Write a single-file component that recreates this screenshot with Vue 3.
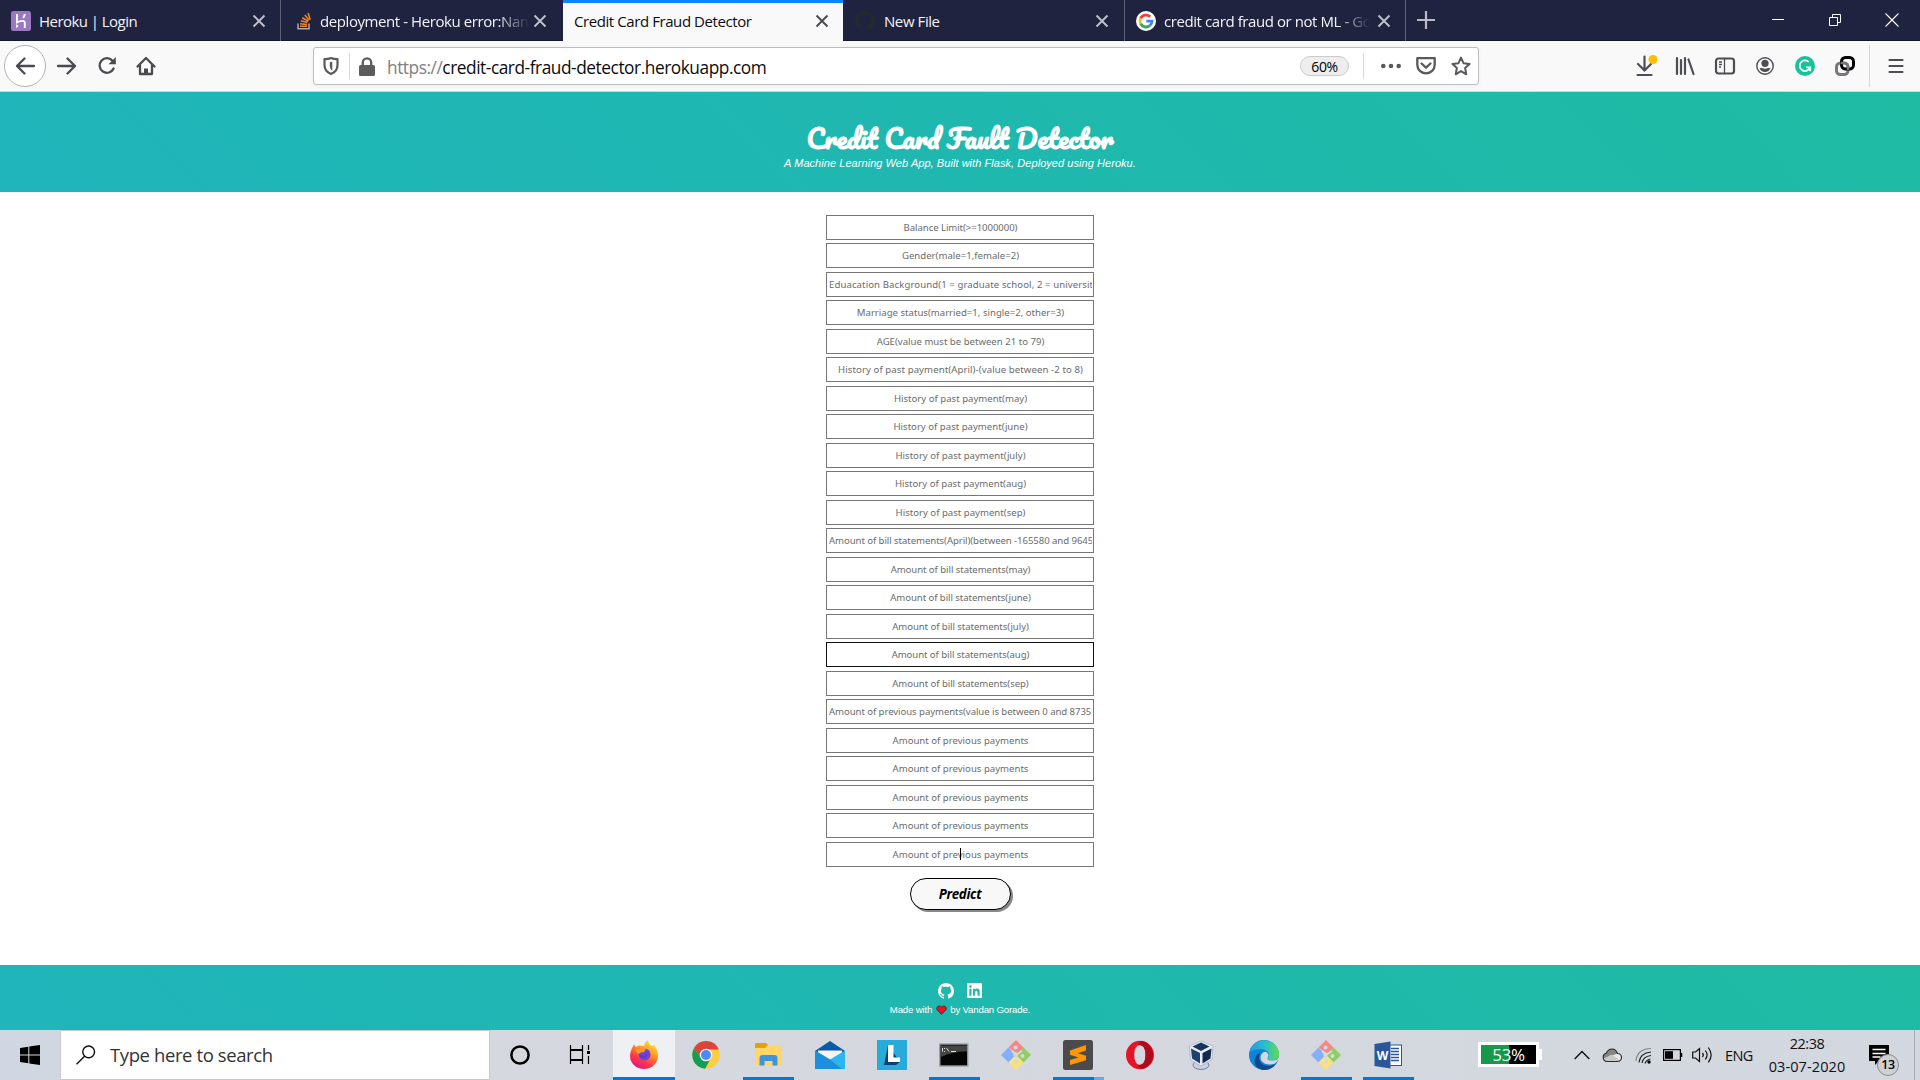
<script setup>
const fields = [
  { label: 'Balance Limit(>=1000000)', size: 'snug' },
  { label: 'Gender(male=1,female=2)' },
  { label: 'Eduacation Background(1 = graduate school, 2 = university, 3 = high school)', size: 'wide' },
  { label: 'Marriage status(married=1, single=2, other=3)' },
  { label: 'AGE(value must be between 21 to 79)' },
  { label: 'History of past payment(April)-(value between -2 to 8)', size: 'wide' },
  { label: 'History of past payment(may)' },
  { label: 'History of past payment(june)' },
  { label: 'History of past payment(july)' },
  { label: 'History of past payment(aug)' },
  { label: 'History of past payment(sep)' },
  { label: 'Amount of bill statements(April)(between -165580 and 964511)', size: 'snug' },
  { label: 'Amount of bill statements(may)', size: 'snug' },
  { label: 'Amount of bill statements(june)', size: 'snug' },
  { label: 'Amount of bill statements(july)', size: 'snug' },
  { label: 'Amount of bill statements(aug)', size: 'snug' },
  { label: 'Amount of bill statements(sep)', size: 'snug' },
  { label: 'Amount of previous payments(value is between 0 and 873552)', size: 'snug' },
  { label: 'Amount of previous payments' },
  { label: 'Amount of previous payments' },
  { label: 'Amount of previous payments' },
  { label: 'Amount of previous payments' },
  { label: 'Amount of previous payments' },
]
const hovered = 15
const focused = 22

const tabs = [
  { id: 'heroku', title: 'Heroku | Login' },
  { id: 'so', title: 'deployment - Heroku error:Name' },
  { id: 'detector', title: 'Credit Card Fraud Detector', active: true },
  { id: 'github', title: 'New File' },
  { id: 'google', title: 'credit card fraud or not ML - Goo' },
]

const apps = [
  { id: 'cortana' },
  { id: 'taskview' },
  { id: 'firefox', state: 'current' },
  { id: 'chrome' },
  { id: 'explorer', state: 'open' },
  { id: 'mail' },
  { id: 'lenovo' },
  { id: 'terminal', state: 'open' },
  { id: 'git' },
  { id: 'sublime', state: 'stacked' },
  { id: 'opera' },
  { id: 'vbox' },
  { id: 'edge' },
  { id: 'git', state: 'open' },
  { id: 'word', state: 'open' },
]
const octocat = 'M8 0C3.58 0 0 3.58 0 8c0 3.54 2.29 6.53 5.47 7.59.4.07.55-.17.55-.38 0-.19-.01-.82-.01-1.49-2.01.37-2.53-.49-2.69-.94-.09-.23-.48-.94-.82-1.13-.28-.15-.68-.52-.01-.53.63-.01 1.08.58 1.23.82.72 1.21 1.87.87 2.33.66.07-.52.28-.87.51-1.07-1.78-.2-3.64-.89-3.64-3.95 0-.87.31-1.59.82-2.15-.08-.2-.36-1.02.08-2.12 0 0 .67-.21 2.2.82.64-.18 1.32-.27 2-.27s1.36.09 2 .27c1.53-1.04 2.2-.82 2.2-.82.44 1.1.16 1.92.08 2.12.51.56.82 1.27.82 2.15 0 3.07-1.87 3.75-3.65 3.95.29.25.54.73.54 1.48 0 1.07-.01 1.93-.01 2.2 0 .21.15.46.55.38A8.01 8.01 0 0 0 16 8c0-4.42-3.58-8-8-8z'
</script>

<template>
  <div class="screen">
    <div class="tabbar">
      <div v-for="t in tabs" :key="t.id" class="tab" :class="[t.id, { active: t.active }]">
        <svg v-if="t.id === 'heroku'" class="fav" viewBox="0 0 20 20">
          <rect width="20" height="20" rx="2.500" fill="#9a78c2" />
          <path d="M6 3v8.500q3-1.600 5.500-1.600 2.300 0 2.300 2V17M13.800 3q-.2 2.200-1.600 4" fill="none" stroke="#fff" stroke-width="1.900" />
          <path d="M5.200 13v4.200l2.500-2.100z" fill="#fff" />
        </svg>
        <svg v-else-if="t.id === 'so'" class="fav" viewBox="0 0 20 20">
          <path d="M4 12.500v5.300h11v-5.300" fill="none" stroke="#a9acb3" stroke-width="1.500" />
          <path d="M6 15.300h7M6.100 12.700l7 .8M6.800 9.700l6.600 1.900M8.300 6.700l5.900 3.600M10.800 4l4.500 5.200M14 2l2.300 6.400" stroke="#f08127" stroke-width="1.600" />
        </svg>
        <svg v-else-if="t.id === 'github'" class="fav" viewBox="0 0 16 16"><path :d="octocat" fill="#24292e" /></svg>
        <svg v-else-if="t.id === 'google'" class="fav" viewBox="0 0 20 20">
          <circle cx="10" cy="10" r="10" fill="#fff" />
          <g fill="none" stroke-width="2.800">
            <path d="M14.200 5.800A6 6 0 0 0 4.600 7.400" stroke="#ea4335" />
            <path d="M4.600 7.400a6 6 0 0 0 0 5.200" stroke="#fbbc05" />
            <path d="M4.600 12.600a6 6 0 0 0 9.200 2" stroke="#34a853" />
            <path d="M13.800 14.600A6 6 0 0 0 16 10.200H10.300" stroke="#4285f4" />
          </g>
        </svg>
        <span class="title">{{ t.title }}</span>
        <svg class="x" viewBox="0 0 14 14"><path d="M1.500 1.500l11 11M12.500 1.500l-11 11" fill="none" stroke="currentColor" stroke-width="1.900" /></svg>
      </div>
      <svg class="plus" viewBox="0 0 18 18"><path d="M9 0v18M0 9h18" stroke="#b9bac4" stroke-width="2.200" /></svg>
      <div class="winbtns">
        <svg viewBox="0 0 14 14"><path d="M1 6.500h12" stroke="#fff" /></svg>
        <svg viewBox="0 0 14 14"><path d="M1.500 4.500h8v8h-8zM4.500 4.500v-3h8v8h-3" fill="none" stroke="#fff" /></svg>
        <svg viewBox="0 0 14 14"><path d="M.5.5l13 13M13.500.5l-13 13" stroke="#fff" stroke-width="1.100" /></svg>
      </div>
    </div>

    <div class="toolbar">
      <div class="nav">
        <div class="back">
          <svg viewBox="0 0 20 20"><path d="M19 10H2M9.500 2.500L2 10l7.500 7.500" /></svg>
        </div>
        <svg viewBox="0 0 20 20"><path d="M1 10h17M10.500 2.500L18 10l-7.500 7.500" /></svg>
        <svg viewBox="0 0 20 20"><path d="M16.600 12.500A7.300 7.300 0 1 1 15.700 5" /><path d="M18.800 1v7.300h-7.300z" fill="#4a4a4f" stroke="none" /></svg>
        <svg class="home" viewBox="0 0 20 20"><path d="M1.500 10.500L10 2l8.500 8.500M4 9v9h12V9" /><path d="M8 18.500v-6h4v6z" fill="#4a4a4f" stroke="none" /></svg>
      </div>
      <div class="urlbar">
        <svg class="shield" viewBox="0 0 18 20"><path d="M9 2C7 3 4.500 3.200 2.500 3.200V9c0 4.500 2.700 7.500 6.500 9 3.800-1.500 6.500-4.500 6.500-9V3.200C13.500 3.200 11 3 9 2z" fill="none" stroke="#5a5a5e" stroke-width="2.200" stroke-linejoin="round" /><path d="M8.800 5.500c-.8.500-1.500.7-2.500.8v3c0 2.600.8 4.300 2.500 5.500z" fill="#5a5a5e" transform="translate(1.500 0)" /></svg>
        <i class="vsep" />
        <svg class="lock" viewBox="0 0 16 19"><rect x="0" y="8" width="16" height="11" rx="1.500" fill="#5d5d60" /><path d="M3.800 9V5.500a4.200 4.200 0 0 1 8.400 0V9" fill="none" stroke="#5d5d60" stroke-width="2.300" /></svg>
        <span class="url"><em>https://</em>credit-card-fraud-detector.herokuapp.com</span>
        <span class="zoom">60%</span>
        <i class="vsep s2" />
        <svg class="dots" viewBox="0 0 20 20"><g fill="#5a5a5e"><circle cx="2.300" cy="10" r="2.300" /><circle cx="10" cy="10" r="2.300" /><circle cx="17.700" cy="10" r="2.300" /></g></svg>
        <svg class="pocket" viewBox="0 0 20 20"><path d="M1.300 2.200h17.400V9A8.700 8.300 0 0 1 1.300 9z M5.500 7.500L10 11.700l4.500-4.200" fill="none" stroke="#5a5a5e" stroke-width="2.300" stroke-linejoin="round" stroke-linecap="round" /></svg>
        <svg class="star" viewBox="0 0 20 20"><path d="M10 1.600l2.500 5.600 6.100.7-4.500 4.100 1.200 6.300-5.300-3.200-5.300 3.200 1.200-6.300L1.400 7.900l6.100-.7z" fill="none" stroke="#5a5a5e" stroke-width="2" stroke-linejoin="round" /></svg>
      </div>
      <div class="tools">
        <svg viewBox="0 0 22 22"><path d="M10.500 1.500v13M4 9l6.500 6.500L17 9M3.500 20h14" fill="none" stroke="#4d4d52" stroke-width="2.200" stroke-linecap="round" /><circle cx="19" cy="4.500" r="4.500" fill="#ffbf00" /></svg>
        <svg viewBox="0 0 22 22"><path d="M3 3v16M7 5v14M11 3v16M14.500 4.500l5 14.500" fill="none" stroke="#4d4d52" stroke-width="2.200" stroke-linecap="round" /></svg>
        <svg viewBox="0 0 22 22"><rect x="2" y="3.500" width="18" height="15" rx="2.500" fill="none" stroke="#4d4d52" stroke-width="2.200" /><path d="M10.500 3.500v15M5 7h3M5 9.500h3M5 12h2" stroke="#4d4d52" stroke-width="1.300" /></svg>
        <svg viewBox="0 0 22 22"><circle cx="11" cy="11" r="8.200" fill="none" stroke="#4d4d52" stroke-width="1.400" /><circle cx="11" cy="8.300" r="3.600" fill="#4d4d52" /><path d="M5.500 13.300q2.500-.8 3.500 0 2 1 4 0 1-.8 3.500 0a6 6 0 0 1-11 0z" fill="#4d4d52" /></svg>
        <svg viewBox="0 0 22 22"><circle cx="11" cy="11" r="10" fill="#15c39a" /><path d="M14.800 7A5.300 5.300 0 1 0 16 12.500M12 12.300h4.200v4" fill="none" stroke="#fff" stroke-width="1.800" /></svg>
        <svg viewBox="0 0 22 22"><rect x="2.500" y="8" width="11.500" height="11.500" rx="4" fill="none" stroke="#77777b" stroke-width="3" /><rect x="7.500" y="2.500" width="12" height="11.500" rx="4" fill="none" stroke="#000" stroke-width="3" /><path d="M6.500 8h3.500q4 0 4 4v3" fill="none" stroke="#77777b" stroke-width="2.600" /></svg>
      </div>
      <i class="vsep s3" />
      <svg class="burger" viewBox="0 0 16 16"><path d="M1.500 2h13M1.500 8h13M1.500 14h13" stroke="#4d4d52" stroke-width="2.200" stroke-linecap="round" /></svg>
    </div>

    <header class="hero">
      <h1>Credit Card Fault Detector</h1>
      <p>A Machine Learning Web App, Built with Flask, Deployed using Heroku.</p>
    </header>

    <main>
      <form>
        <div v-for="(f, i) in fields" :key="i" class="row">
          <input :placeholder="f.label" :class="[f.size, { hover: i === hovered }]" />
          <i v-if="i === focused" class="caret" />
        </div>
        <button type="button">Predict</button>
      </form>
    </main>

    <footer>
      <div class="social">
        <svg class="gh" viewBox="0 0 16 16"><path :d="octocat" fill="#fff" /></svg>
        <svg class="li" viewBox="0 0 15 15"><path fill-rule="evenodd" d="M1 0h13q1 0 1 1v13q0 1-1 1H1q-1 0-1-1V1q0-1 1-1zM2.300 5.700v7h2.200v-7zM3.400 2.200a1.250 1.250 0 1 0 0 2.500 1.250 1.250 0 0 0 0-2.500zM6 5.700v7h2.200V9.300c0-2.200 2.300-2.200 2.300 0v3.400h2.200V8.600c0-3.400-3.300-3.700-4.500-2v-.9z" fill="#fff" /></svg>
      </div>
      <p>Made with <svg viewBox="0 0 12 11"><path d="M6 10.300L1.200 5.400C-.6 3 2.800-.8 6 2.300 9.200-.8 12.600 3 10.800 5.400z" fill="#e81224" stroke="#43201f" stroke-width=".9" /></svg> by Vandan Gorade.</p>
    </footer>

    <div class="taskbar">
      <div class="start"><svg viewBox="0 0 20 20"><path d="M0 3l8.300-1.200v7.700H0zM9.300 1.600L20 0v9.500H9.300zM0 10.500h8.300v7.700L0 17zM9.300 10.500H20V20L9.300 18.400z" /></svg></div>
      <div class="search">
        <svg viewBox="0 0 21 21"><circle cx="13.300" cy="7.200" r="6.200" fill="none" stroke="#111" stroke-width="1.500" /><path d="M9 11.700L.6 20.100" stroke="#111" stroke-width="1.500" /></svg>
        <span>Type here to search</span>
      </div>
      <div class="apps">
        <div v-for="(a, i) in apps" :key="i" class="app" :class="a.state">
          <svg v-if="a.id === 'cortana'" viewBox="0 0 30 30"><circle cx="15" cy="15" r="8.600" fill="none" stroke="#000" stroke-width="2.500" /></svg>
          <svg v-else-if="a.id === 'taskview'" viewBox="0 0 30 30"><path d="M3.500 5v4.500h12V5M3.500 24v-3.500h12V24M3.500 10.500h12v9h-12zM21.500 5v5M21.500 16v8" fill="none" stroke="#000" stroke-width="1.200" /><rect x="20" y="11" width="3" height="3" /></svg>
          <svg v-else-if="a.id === 'firefox'" viewBox="0 0 30 30">
            <defs>
              <linearGradient id="ff" x1=".8" y1="0" x2=".25" y2="1"><stop offset="0" stop-color="#fff03f" /><stop offset=".4" stop-color="#ff9420" /><stop offset=".7" stop-color="#ff3648" /><stop offset="1" stop-color="#e0128a" /></linearGradient>
            </defs>
            <path d="M3 8l2-3.500L7 7q3-2 5-1.200L15 6q1-4.500 4-6 .5 4 4 6l2-1q4 5 4 11a14 13 0 0 1-28 0q0-4 2-8z" fill="url(#ff)" />
            <circle cx="15.500" cy="14.500" r="6" fill="#7341d8" /><path d="M6 10q5-1 8-3l3 2-2 3q-4 0-5 2-2-1-4-4z" fill="#ff9a2a" /><path d="M10 14q5 4 9-1-1 6-6 5-2-1-3-4z" fill="#5a3bc4" />
          </svg>
          <svg v-else-if="a.id === 'chrome'" viewBox="0 0 30 30">
            <circle cx="15" cy="15" r="13.800" fill="#ffcd40" /><path d="M3 8.100A13.800 13.800 0 0 1 27.800 9.500H15l-5.400 8.600z" fill="#db4437" /><path d="M3.100 8.100A13.800 13.800 0 0 0 14 28.800L20 18l-10.400 0z" fill="#0f9d58" /><circle cx="15" cy="15" r="6.300" fill="#f5f5f5" /><circle cx="15" cy="15" r="5" fill="#4c8bf5" />
          </svg>
          <svg v-else-if="a.id === 'explorer'" viewBox="0 0 30 30"><path d="M2 4q0-1 1-1h10l2 2v5H2z" fill="#e3a008" /><path d="M2 8h10l3-3h13q1 0 1 1v19H2z" fill="#ffd667" /><path d="M6.500 25.500V18q0-3 3-3h12q3 0 3 3v7.500h-5V21h-8v4.500z" fill="#4094dc" /></svg>
          <svg v-else-if="a.id === 'mail'" viewBox="0 0 30 30"><path d="M0 11L15 1l15 10v6H0z" fill="#0859a8" /><path d="M3 10.500h24v7L15 24 3 17z" fill="#f5f5f5" /><path d="M0 10.500l15 9 15-9V29H0z" fill="#2cb5f0" /><path d="M0 10.500l15 9 12 9.500H0z" fill="#1683d8" opacity=".75" /></svg>
          <svg v-else-if="a.id === 'lenovo'" viewBox="0 0 30 30"><rect width="30" height="30" fill="#29abd9" /><path d="M11 5L7 25h12l4-3z" fill="#0c3f78" /><path d="M11 5h5.500v12.500H23V22H11z" fill="#fff" /></svg>
          <svg v-else-if="a.id === 'terminal'" viewBox="0 0 30 30"><rect x=".8" y="4" width="28" height="22" fill="#050505" stroke="#9b9ea2" stroke-width="1.400" /><path d="M2 5.500h26v6Q15 11 2 17z" fill="#444" /><path d="M3.500 8v3.500M5.500 8v1M5.500 11v1M7.500 8l2.500 3.500M12 11.500h5" stroke="#ddd" fill="none" /></svg>
          <svg v-else-if="a.id === 'git'" viewBox="0 0 30 30">
            <path d="M15 0l7.500 7.500-6 6-9-6z" fill="#fc8584" /><path d="M7.500 7.500l7.500 7.500-7.500 7.500L0 15z" fill="#85aefc" /><path d="M22.500 7.500L30 15l-7.500 7.500L15 15z" fill="#8dcf60" /><path d="M15 15l7.500 7.500L15 30l-7.500-7.500z" fill="#fbe27b" /><path d="M15 15l-4-4M15 16v6M15 15l6-4" stroke="#d5d8de" stroke-width="2" /><circle cx="14.500" cy="7.500" r="2" fill="#d5d8de" /><circle cx="14.500" cy="14.800" r="2.300" fill="#d5d8de" /><circle cx="21.500" cy="16" r="2" fill="#d5d8de" /><circle cx="15" cy="22" r="2" fill="#d5d8de" />
          </svg>
          <svg v-else-if="a.id === 'sublime'" viewBox="0 0 30 30"><rect width="30" height="30" rx="2.500" fill="#4b4b4b" /><path d="M7 10.500L23 5v5.500l-8.500 2.700 8.500 2.600v4.500L7 25v-5l8.500-2.600L7 14.800z" fill="#ff9800" /></svg>
          <svg v-else-if="a.id === 'opera'" viewBox="0 0 30 30"><path fill-rule="evenodd" d="M15 .7a14 14.300 0 1 0 0 28.600 14 14.300 0 1 0 0-28.600zM15 5q5.500.5 5.500 10T15 25q-5.800-.5-5.800-10T15 5z" fill="#e51428" /><path d="M17 1a14 14.300 0 0 1 0 28q-3-.5-4-4.200 7.500 1 7.500-9.800T13 5q1-3.500 4-4z" fill="#b00a1e" /></svg>
          <svg v-else-if="a.id === 'vbox'" viewBox="0 0 30 30"><ellipse cx="14" cy="25" rx="8" ry="4.500" fill="#c7d0e0" stroke="#7482a0" /><path d="M14 1l12 5-1 13.500L14 26 3.500 20 2.500 6z" fill="#e8edf5" stroke="#a0abc0" stroke-width=".7" /><path d="M14 2.500l8.500 4L14 11 5.500 6.500z" fill="#16345f" /><path d="M4 8.500l9 4.500v10.500L5 18.500z" fill="#1c416f" /><path d="M24.500 8.500l-9 4.500v10.500l8-5z" fill="#10294d" /></svg>
          <svg v-else-if="a.id === 'edge'" viewBox="0 0 30 30">
            <defs><linearGradient id="eg" x1="0" y1=".5" x2="1" y2=".5"><stop offset="0" stop-color="#1d9be0" /><stop offset=".55" stop-color="#2bc0c8" /><stop offset="1" stop-color="#63dc4c" /></linearGradient></defs>
            <circle cx="15" cy="15" r="15" fill="#1382d5" /><path d="M.2 13A15 15 0 0 1 30 14q0 6.500-7 6.500-4.500 0-4.500-2.500 1.500-1 1.500-3 0-5-8-6Q4 9 .2 13z" fill="url(#eg)" /><path d="M11 13q-4 12 9 13 4 0 7.800-3Q22 31 13.500 30 4 27 6 19q1-5 5-6z" fill="#114a8b" /><path d="M14 12.500q-4 3.500-1.500 8.500 5 5.500 13.500 2.500l4-4.500V17q-2 4-7 3.500-5 0-4.500-2.500 2-3 0-5-2-2-4.500-.5z" fill="#d5d8de" />
          </svg>
          <svg v-else viewBox="0 0 30 30"><rect x="15" y="5" width="13.500" height="20.500" fill="#fff" stroke="#2b579a" /><path d="M18 8.500h8M18 11.500h8M18 14.500h8M18 17.500h8M18 20.500h8" stroke="#2b579a" stroke-width="1.400" /><path d="M1.500 4L17.500 1.500v27L1.500 26z" fill="#2b579a" /><text x="9.500" y="19.500" text-anchor="middle" font-size="12" font-weight="700" fill="#fff" font-family="Open Sans, sans-serif">W</text></svg>
        </div>
      </div>
      <div class="tray">
        <div class="meter"><span>53%</span></div>
        <svg class="chev" viewBox="0 0 16 10"><path d="M.7 9L8 1.500 15.300 9" fill="none" stroke="#111" stroke-width="1.400" /></svg>
        <svg class="cloud" viewBox="0 0 20 15"><path d="M5 13.500a4.200 4.200 0 0 1-.8-8.200Q6 1 10 1t5.500 4.500a4 4 0 0 1 0 8z" fill="#e9e9ea" /><path d="M1.500 10.500Q1 5.500 4.500 5.200 6 1 10 1t5.300 4.500L9 8z" fill="#858585" /><path d="M1.500 11l8-4.500 8 5.500-2 1.500H5z" fill="#c9c9ca" /><path d="M5 13.500a4.200 4.200 0 0 1-.8-8.200Q6 1 10 1t5.500 4.500a4 4 0 0 1 0 8z" fill="none" stroke="#2a2a2a" stroke-width="1.200" /></svg>
        <svg class="wifi" viewBox="0 0 17 17"><g fill="none" stroke="#222" stroke-width="1.200"><path d="M1 14Q2 2 16 1.500" opacity=".45" /><path d="M4 15.500Q5 6 16 5" /><path d="M7 16Q8 9.500 16 8.500" /><path d="M10 16.500Q11 13 15.500 12" /></g><circle cx="14" cy="15" r="1.700" /></svg>
        <svg class="batt" viewBox="0 0 20 12"><rect x=".6" y=".6" width="16.800" height="10.800" fill="none" stroke="#000" stroke-width="1.200" /><rect x="2" y="2.200" width="8" height="7.600" /><path d="M18.600 4v4" stroke="#000" stroke-width="1.300" /></svg>
        <svg class="vol" viewBox="0 0 21 18"><path d="M.7 6v6h2.800L7.500 15.500v-13L3.500 6zM10.500 7q1.700 2 0 4M13.300 4.500q3.600 4.500 0 9M16.300 1.500q5.700 7.500 0 15" fill="none" stroke="#111" stroke-width="1.200" /></svg>
        <span class="lang">ENG</span>
        <div class="clock"><span>22:38</span><span class="date">03-07-2020</span></div>
        <div class="notif">
          <svg viewBox="0 0 20 20"><path d="M0 0h20v16H10l-4 4v-4H0z" /><path d="M3.500 4.500h13M3.500 8.500h13M3.500 12h8" stroke="#fff" stroke-width="1.300" /></svg>
          <b>13</b>
        </div>
        <i class="peek" />
      </div>
    </div>
  </div>
</template>

<style>
body { margin: 0; overflow: hidden; }
</style>

<style scoped>
.screen { width: 1920px; height: 1080px; display: flex; flex-direction: column; background: #fff; overflow: hidden; font-family: "Open Sans", sans-serif; }
.screen * { box-sizing: border-box; }
svg { display: block; flex: none; overflow: visible; }
i { flex: none; }

.tabbar { height: 41px; flex: none; background: #202340; display: flex; align-items: center; border-bottom: 1px solid #15172c; }
.tab { width: 281px; height: 41px; display: flex; align-items: center; padding: 2px 14px 0 11px; color: #f3f3f6; font-size: 15px; border-right: 1px solid #5d5f75; }
.tab.so { width: 282px; border: 0; padding: 2px 16px 0 13px; }
.tab.detector { width: 280px; border: 0; background: #f9f9fa; border-top: 3px solid #0a84ff; padding: 0 14px 1px 11px; color: #0c0c0d; }
.tab.github { width: 282px; padding: 2px 15px 0 12px; }
.tab.google { padding-left: 11px; }
.fav { width: 20px; height: 20px; margin-right: 9px; }
.so .fav { margin-right: 6px; }
.heroku .fav, .google .fav { margin-right: 8px; }
.title { flex: 1; min-width: 0; white-space: nowrap; overflow: hidden; letter-spacing: -.42px; margin-right: 7px; line-height: 24px; }
.heroku .title { letter-spacing: -.55px; }
.so .title { margin-right: 4px; }
.so .title, .google .title { -webkit-mask-image: linear-gradient(to right, #000 calc(100% - 32px), transparent); mask-image: linear-gradient(to right, #000 calc(100% - 32px), transparent); }
.x { width: 14px; height: 14px; color: #c0c1ca; }
.active .x { color: #4a4a4f; }
.plus { width: 18px; height: 18px; margin-left: 11px; }
.winbtns { margin-left: auto; display: flex; gap: 43px; padding-right: 21px; }
.winbtns svg { width: 14px; height: 14px; }

.toolbar { height: 51px; flex: none; background: #f9f9fa; border-bottom: 1px solid #d5d5d8; display: flex; align-items: center; }
.nav { width: 313px; display: flex; align-items: center; gap: 20px; padding-left: 4px; }
.nav svg { width: 20px; height: 20px; fill: none; stroke: #4a4a4f; stroke-width: 2.300; stroke-linecap: round; stroke-linejoin: round; }
.nav .home { margin-left: -1px; }
.back { width: 42px; height: 42px; border: 1px solid #b4b4b7; border-radius: 50%; background: #fff; display: flex; align-items: center; justify-content: center; margin-right: -9px; }
.urlbar { width: 1166px; height: 38px; background: #fff; border: 1px solid #bdbdbf; border-radius: 3px; display: flex; align-items: center; box-shadow: 0 1px 4px rgba(0, 0, 0, .05); }
.vsep { width: 1px; height: 26px; background: #d7d7db; }
.shield { width: 18px; height: 20px; margin: 0 9px 0 8px; }
.lock { width: 16px; height: 19px; margin: 0 12px 0 9px; }
.url { font-size: 17.300px; letter-spacing: -.45px; color: #0c0c0d; white-space: nowrap; width: 913px; padding-top: 3px; }
.url em { font-style: normal; color: #808083; }
.zoom { width: 49px; height: 20px; border: 1px solid #cbcbce; border-radius: 10px; background: #eee; font-size: 14px; letter-spacing: -.4px; line-height: 20px; text-align: center; }
.s2 { margin: 0 17px 0 14px; }
.dots { width: 20px; height: 20px; }
.pocket { width: 20px; height: 20px; margin: 0 15px; }
.star { width: 20px; height: 20px; }
.tools { display: flex; gap: 18px; margin-left: 155px; }
.tools svg { width: 22px; height: 22px; }
.s3 { height: 42px; margin: 0 18px 0 13px; }
.burger { width: 16px; height: 16px; }

.hero, footer { background: linear-gradient(45deg, #1fb5bb, #1fbba3); color: #fff; text-align: center; flex: none; }
.hero { height: 100px; padding-top: 26px; }
h1 { margin: 0; font: 700 26.300px/40px Pacifico, cursive; height: 38px; white-space: nowrap; }
.hero p { margin: 0; font: italic 11px/14px "Liberation Sans", sans-serif; letter-spacing: .055px; }
main { height: 773px; flex: none; padding-top: 22.900px; }
form { display: flex; flex-direction: column; align-items: center; }
.row { height: 28.500px; position: relative; }
input { display: block; width: 268px; height: 25px; border: 1px solid #767676; border-radius: 0; padding: 0 1px 0 2px; text-align: center; background: #fff; font: 9.600px "Noto Sans", sans-serif; outline: 0; }
input::placeholder { color: #6c6c6c; opacity: 1; }
input.snug { letter-spacing: -.07px; }
input.wide { letter-spacing: .09px; }
input.hover { border-color: #111; }
.caret { position: absolute; left: 134px; top: 6px; width: 1px; height: 12px; background: #000; }
button { width: 101px; height: 32px; margin-top: 7.500px; border: 1px solid #000; border-radius: 17px; background: #f8f8f8; box-shadow: 2px 2px 0 #888; font: italic 700 13.300px "Open Sans", sans-serif; letter-spacing: -.3px; padding: 0; color: #000; }
footer { height: 65px; padding-top: 18px; }
.social { display: flex; justify-content: center; gap: 13px; }
.gh { width: 16px; height: 16px; }
.li { width: 15px; height: 15px; }
footer p { margin: 4px 0 0; font: 9.600px/14px "Liberation Sans", sans-serif; letter-spacing: -.15px; display: flex; justify-content: center; align-items: center; gap: 3.500px; }
footer p svg { width: 11px; height: 10px; }

.taskbar { height: 50px; flex: none; display: flex; background: linear-gradient(90deg, #d0d7e2, #d5d8de 30%, #d3d7df); }
.start { width: 60px; display: flex; align-items: center; justify-content: center; }
.start svg { width: 20px; height: 20px; }
.search { width: 430px; height: 50px; border: 1px solid #c9c9cc; background: #fff; display: flex; align-items: center; padding-left: 15px; padding-bottom: 1px; font-size: 18.500px; letter-spacing: -.4px; color: #333; }
.search svg { width: 20px; height: 20px; margin-right: 14px; }
.apps { display: flex; margin-left: -1px; }
.app { width: 62px; height: 50px; display: flex; align-items: center; justify-content: center; position: relative; }
.app svg { width: 30px; height: 30px; }
.current { background: #eef0f3; box-shadow: inset 0 -3px #0078d7; }
.open::after, .stacked::after { content: ''; position: absolute; left: 6px; bottom: 0; width: 51px; height: 3px; background: #0078d7; }
.stacked::after { background: linear-gradient(90deg, #0078d7 41px, #66abe6 41px); }
.tray { flex: 1; display: flex; align-items: center; padding-left: 59px; }
.meter { width: 61px; height: 25px; border: 3px solid #fff; background: linear-gradient(90deg, #16994a 28px, #000 28px); color: #fff; font-size: 17px; line-height: 19px; letter-spacing: -.4px; text-align: center; position: relative; flex: none; top: -1px; }
.meter::after { content: ''; position: absolute; right: -6px; top: 4px; width: 3px; height: 11px; background: #fff; }
.chev { width: 16px; height: 10px; margin-left: 35px; }
.cloud { width: 20px; height: 15px; margin-left: 12px; }
.wifi { width: 17px; height: 17px; margin-left: 13px; }
.batt { width: 20px; height: 12px; margin-left: 11px; }
.vol { width: 21px; height: 18px; margin-left: 9px; }
.lang { width: 30px; margin-left: 12px; font-size: 14.500px; letter-spacing: -.6px; color: #111; }
.clock { width: 80px; margin-left: 12px; display: flex; flex-direction: column; text-align: center; font-size: 14.500px; line-height: 23px; letter-spacing: -.5px; color: #111; white-space: nowrap; }
.date { letter-spacing: .1px; }
.notif { position: relative; margin-left: 22px; }
.notif svg { width: 20px; height: 20px; }
.notif b { position: absolute; left: 8px; top: 9px; width: 22px; height: 22px; border-radius: 50%; background: #d0d0d2; border: 1px solid #8b8b8e; font-size: 12.500px; font-weight: 600; line-height: 20px; text-align: center; letter-spacing: -.3px; }
.peek { width: 1px; height: 50px; background: #a9adb5; margin-left: auto; margin-right: 5px; }
</style>
